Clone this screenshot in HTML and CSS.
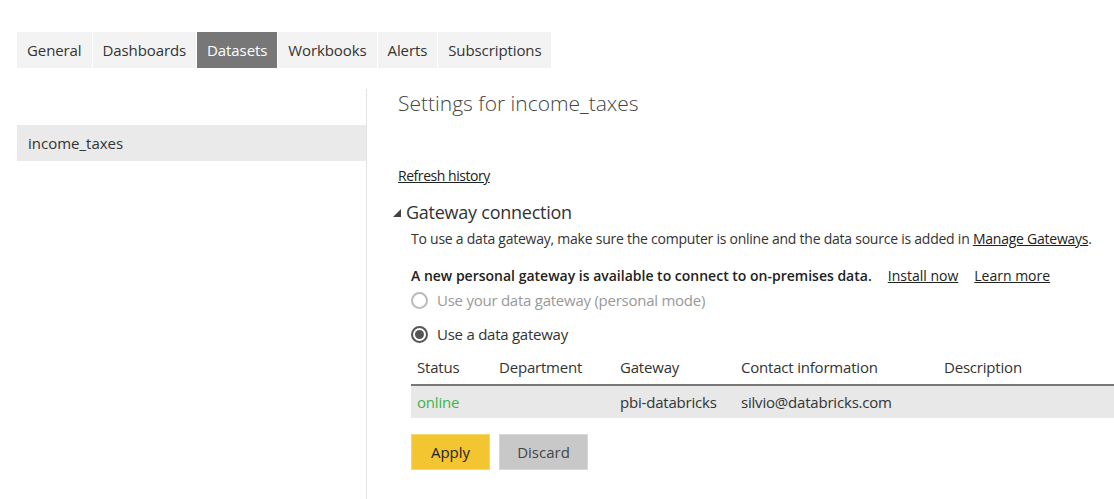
FILE: index.html
```html
<!DOCTYPE html>
<html>
<head>
<meta charset="utf-8">
<link rel="stylesheet" href="styles.css">
</head>
<body>
<div class="page">
  <nav class="tabs">
    <div class="tab">General</div>
    <div class="tab">Dashboards</div>
    <div class="tab active">Datasets</div>
    <div class="tab">Workbooks</div>
    <div class="tab">Alerts</div>
    <div class="tab">Subscriptions</div>
  </nav>
  <div class="main">
    <aside class="sidebar">
      <div class="item">income_taxes</div>
    </aside>
    <section class="content">
      <h1 class="title">Settings for income_taxes</h1>
      <a class="link refresh">Refresh history</a>
      <div class="section-head"><span class="tri"></span>Gateway connection</div>
      <div class="body">
        <p class="desc">To use a data gateway, make sure the computer is online and the data source is added in <a class="link">Manage Gateways</a>.</p>
        <div class="notice"><span class="strong">A new personal gateway is available to connect to on-premises data.</span><a class="link">Install now</a><a class="link">Learn more</a></div>
        <div class="radio disabled"><span class="circle"></span>Use your data gateway (personal mode)</div>
        <div class="radio checked"><span class="circle"></span>Use a data gateway</div>
        <div class="table">
          <div class="row head">
            <div class="c1">Status</div>
            <div class="c2">Department</div>
            <div class="c3">Gateway</div>
            <div class="c4">Contact information</div>
            <div class="c5">Description</div>
          </div>
          <div class="row data">
            <div class="c1 online">online</div>
            <div class="c2"></div>
            <div class="c3">pbi-databricks</div>
            <div class="c4">silvio@databricks.com</div>
            <div class="c5"></div>
          </div>
        </div>
        <div class="buttons">
          <button class="btn apply">Apply</button>
          <button class="btn discard">Discard</button>
        </div>
      </div>
    </section>
  </div>
</div>
</body>
</html>
```
FILE: styles.css
```css
* { box-sizing: border-box; }
html, body { margin: 0; padding: 0; background: #fff; }
body {
  font-family: "Open Sans", "Noto Sans", sans-serif;
  color: #333;
  font-size: 15px;
  overflow: hidden;
  height: 499px;
}
.page { padding: 32px 0 0 17px; }
.tabs { display: flex; height: 36px; gap: 1px; }
.tab {
  background: #f3f3f3;
  color: #333;
  font-size: 15px;
  letter-spacing: -0.1px;
  line-height: 36px;
  padding: 0 10px;
}
.tab.active { background: #777; color: #fff; }
.main { display: flex; margin-top: 21px; }
.sidebar { width: 349px; padding-top: 36px; }
.item {
  background: #eaeaea;
  height: 36px;
  line-height: 36px;
  padding-left: 11px;
  font-size: 15px;
  color: #333;
}
.content {
  border-left: 1px solid #e3e3e3;
  padding-left: 31px;
  flex: 1;
  height: 410px;
}
.title {
  font-weight: 300;
  font-size: 21px;
  color: #444;
  margin: 0;
  line-height: 28px;
}
.link { color: #222; text-decoration: underline; cursor: pointer; }
.refresh { display: block; margin-top: 49px; font-size: 14px; letter-spacing: -0.45px; line-height: 20px; }
.section-head {
  display: flex; align-items: center;
  font-size: 18px; letter-spacing: -0.25px; color: #333;
  margin-left: -5px; margin-top: 13px; line-height: 26px;
}
.tri {
  width: 0; height: 0;
  border-left: 8px solid transparent;
  border-bottom: 8px solid #444;
  margin-right: 5px;
  margin-top: 2px;
}
.body { padding-left: 13px; }
.desc { margin: 4px 0 0; font-size: 14px; letter-spacing: -0.24px; line-height: 20px; color: #333; white-space: nowrap; }
.notice { margin-top: 17px; display: flex; gap: 16px; font-size: 14px; line-height: 20px; white-space: nowrap; }
.strong { font-weight: 600; color: #222; }
.radio { display: flex; align-items: center; font-size: 15px; letter-spacing: -0.25px; height: 26px; line-height: 26px; }
.radio.disabled { color: #999; margin-top: 1px; }
.radio.checked { color: #333; margin-top: 8px; }
.circle {
  width: 17px; height: 17px; border-radius: 50%;
  border: 2px solid #bbb; margin-right: 9px; flex: none;
  display: flex; align-items: center; justify-content: center;
}
.checked .circle { border-color: #555; }
.checked .circle::after {
  content: ""; width: 9px; height: 9px; border-radius: 50%; background: #555;
}
.table { margin-top: 4px; }
.row { display: flex; font-size: 15px; letter-spacing: -0.2px; }
.row.head { height: 35px; line-height: 32px; color: #333; border-bottom: 2px solid #777; }
.row.data { height: 32px; line-height: 33px; background: #e8e8e8; color: #333; }
.row > div { padding-left: 6px; }
.c1 { width: 82px; }
.c2 { width: 121px; }
.c3 { width: 121px; }
.c4 { width: 203px; }
.c5 { flex: 1; }
.online { color: #3cb44b; }
.buttons { display: flex; gap: 9px; margin-top: 16px; }
.btn {
  font-family: inherit; font-size: 15px; height: 36px; border: 1px solid transparent;
  padding: 0; cursor: pointer;
}
.apply { width: 79px; background: #f2c531; color: #222; border-color: #f5d76a; }
.discard { width: 89px; background: #c8c8c8; color: #444; border-color: #d8d8d8; }
```
